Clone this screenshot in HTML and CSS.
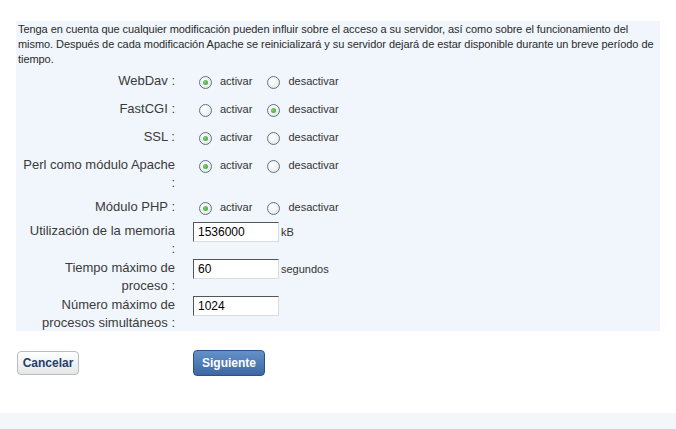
FILE: index.html
```html
<!DOCTYPE html>
<html lang="es">
<head>
<meta charset="utf-8">
<link rel="stylesheet" href="styles.css">
</head>
<body>
<div class="panel">
  <p class="intro">Tenga en cuenta que cualquier modificación pueden influir sobre el acceso a su servidor, así como sobre el funcionamiento del mismo. Después de cada modificación Apache se reinicializará y su servidor dejará de estar disponible durante un breve período de tiempo.</p>
  <div class="form">
    <div class="row radio-row">
      <div class="label">WebDav :</div>
      <div class="value">
        <span class="opt"><span class="radio on"></span><span class="txt">activar</span></span>
        <span class="opt"><span class="radio"></span><span class="txt">desactivar</span></span>
      </div>
    </div>
    <div class="row radio-row">
      <div class="label">FastCGI :</div>
      <div class="value">
        <span class="opt"><span class="radio"></span><span class="txt">activar</span></span>
        <span class="opt"><span class="radio on"></span><span class="txt">desactivar</span></span>
      </div>
    </div>
    <div class="row radio-row">
      <div class="label">SSL :</div>
      <div class="value">
        <span class="opt"><span class="radio on"></span><span class="txt">activar</span></span>
        <span class="opt"><span class="radio"></span><span class="txt">desactivar</span></span>
      </div>
    </div>
    <div class="row radio-row">
      <div class="label">Perl como módulo Apache<br>:</div>
      <div class="value">
        <span class="opt"><span class="radio on"></span><span class="txt">activar</span></span>
        <span class="opt"><span class="radio"></span><span class="txt">desactivar</span></span>
      </div>
    </div>
    <div class="row radio-row">
      <div class="label">Módulo PHP :</div>
      <div class="value">
        <span class="opt"><span class="radio on"></span><span class="txt">activar</span></span>
        <span class="opt"><span class="radio"></span><span class="txt">desactivar</span></span>
      </div>
    </div>
    <div class="row input-row">
      <div class="label">Utilización de la memoria<br>:</div>
      <div class="value"><span class="field">1536000</span><span class="unit">kB</span></div>
    </div>
    <div class="row input-row">
      <div class="label">Tiempo máximo de<br>proceso :</div>
      <div class="value"><span class="field">60</span><span class="unit">segundos</span></div>
    </div>
    <div class="row input-row">
      <div class="label">Número máximo de<br>procesos simultáneos :</div>
      <div class="value"><span class="field">1024</span></div>
    </div>
  </div>
</div>
<div class="buttons">
  <button class="btn btn-cancel">Cancelar</button>
  <button class="btn btn-next">Siguiente</button>
</div>
<div class="band"></div>
</body>
</html>
```
FILE: styles.css
```css
html, body {
  margin: 0;
  padding: 0;
  background: #ffffff;
  font-family: "Liberation Sans", Arial, sans-serif;
  color: #2a2a2a;
}
.panel {
  margin: 21px 16px 0 16px;
  width: 644px;
  background: #f0f6fb;
  padding: 1px 0 0 0;
  height: 309px;
  overflow: hidden;
}
.intro {
  margin: 0;
  padding: 0 0 0 2px;
  font-size: 11px;
  line-height: 15px;
  letter-spacing: -0.06px;
}
.form {
  display: flex;
  flex-direction: column;
}
.row {
  display: grid;
  grid-template-columns: 159px 1fr;
  column-gap: 18px;
}
.label {
  text-align: right;
  font-size: 13px;
  line-height: 18px;
  color: #3a3a3a;
}
.radio-row {
  min-height: 28px;
}
.radio-row .label {
  padding: 5px 0 1px 0;
}
.radio-row .value {
  display: flex;
  align-items: center;
  height: 28px;
  padding-left: 6px;
}
.input-row .label {
  padding: 1px 0 0 0;
}
.input-row .value {
  display: flex;
  align-items: center;
  padding-top: 1px;
  height: 20px;
}
.opt {
  display: flex;
  align-items: center;
}
.opt + .opt {
  margin-left: 15px;
}
.radio {
  box-sizing: border-box;
  width: 13px;
  height: 13px;
  border-radius: 50%;
  border: 1px solid #5f7386;
  background: radial-gradient(circle at 40% 35%, #ffffff 0%, #f4f4f4 45%, #d9dde2 100%);
  display: flex;
  align-items: center;
  justify-content: center;
  margin-top: 2px;
}
.radio.on::after {
  content: "";
  width: 5px;
  height: 5px;
  border-radius: 50%;
  background: radial-gradient(circle at 40% 40%, #7fd36f 0%, #2f9a2a 100%);
}
.txt {
  font-size: 11px;
  margin-left: 8px;
  color: #333;
}
.field {
  box-sizing: border-box;
  display: block;
  width: 86px;
  height: 20px;
  background: #fff;
  border-top: 1px solid #555;
  border-left: 1px solid #555;
  border-right: 1px solid #d8dde2;
  border-bottom: 1px solid #d8dde2;
  font-size: 12px;
  line-height: 18px;
  padding-left: 4px;
  color: #000;
}
.unit {
  font-size: 11px;
  margin-left: 2px;
  color: #333;
}
.buttons {
  display: flex;
  align-items: center;
  margin-top: 19px;
  padding-left: 17px;
}
.btn {
  font-family: "Liberation Sans", Arial, sans-serif;
  font-weight: bold;
  font-size: 12px;
  border-radius: 4px;
  padding: 0;
  cursor: pointer;
}
.btn-cancel {
  width: 62px;
  height: 24px;
  background: linear-gradient(#ffffff, #e4e6e8);
  border: 1px solid #b7bcc2;
  color: #24406a;
}
.btn-next {
  margin-left: 114px;
  width: 72px;
  height: 26px;
  background: linear-gradient(#6391c9, #3d68a3);
  border: 1px solid #2b5287;
  color: #ffffff;
}
.band {
  margin-top: 37px;
  height: 17px;
  background: #f4f7fa;
}
```
